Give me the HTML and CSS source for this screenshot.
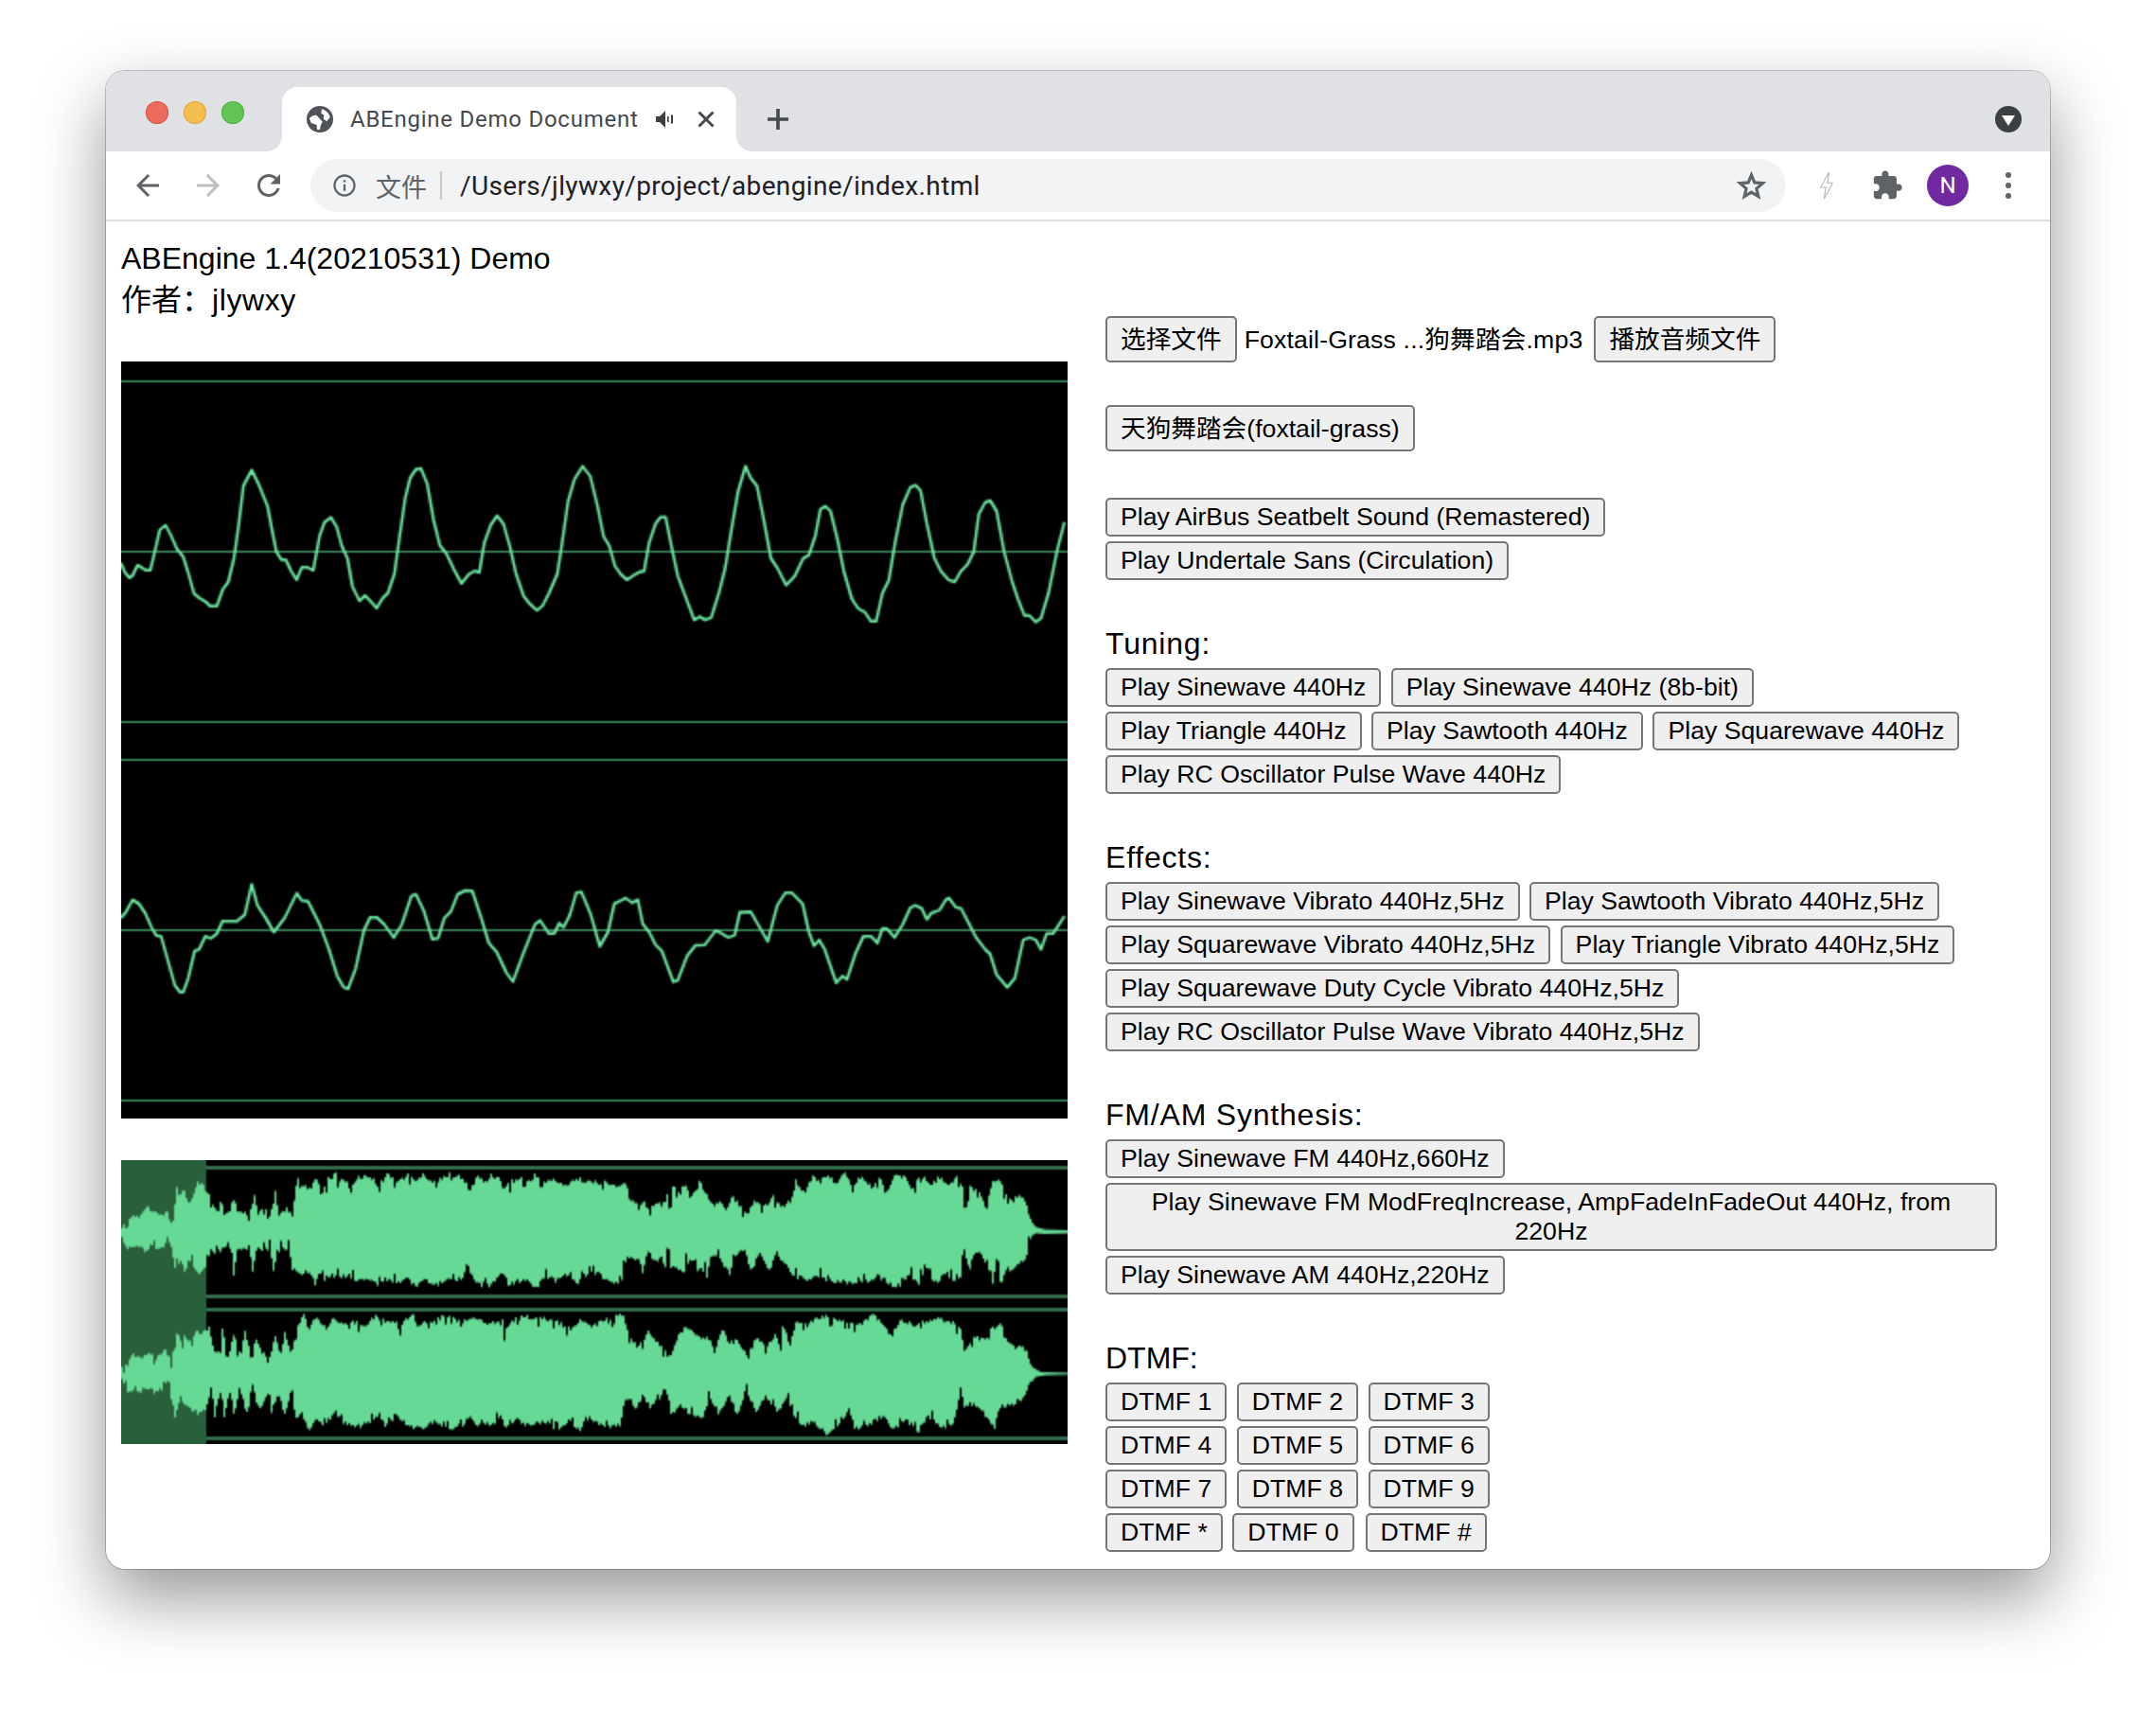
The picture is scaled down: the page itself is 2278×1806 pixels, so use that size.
FILE: index.html
```html
<!DOCTYPE html>
<html lang="zh">
<head>
<meta charset="utf-8">
<title>ABEngine Demo Document</title>
<link rel="stylesheet" href="styles.css">
</head>
<body>
<div class="window">
  <div class="tabstrip">
    <div class="lights"><span class="light red"></span><span class="light yellow"></span><span class="light green"></span></div>
    <div class="tab">
      <svg class="globe" viewBox="2 2 20 20"><circle class="disc" cx="12" cy="12" r="10"/><path class="land" d="M13.4 4.4C16.6 5.2 19 7.6 19.7 10.6L17.2 13.4 14.6 11.8 15.2 9 13 7.6z"/><path class="land" d="M4.1 11.3C5.6 9.6 8 8.6 9.6 9.2L14 14 12.6 16.4 12 20 9.8 19.6 9.6 16.2 5.4 14.8z"/></svg>
      <span class="tab-title">ABEngine Demo Document</span>
      <svg class="speaker" viewBox="0 0 20 20"><path d="M1 7v6h4l6 6V1L5 7z"/><rect x="13" y="7" width="1.6" height="6"/><rect x="17" y="5.5" width="2" height="9"/></svg>
      <svg class="close" viewBox="0 0 20 20"><path d="M2.5 2.5l15 15M17.5 2.5l-15 15"/></svg>
    </div>
    <svg class="plus" viewBox="0 0 24 24"><path d="M12 1v22M1 12h22"/></svg>
    <div class="tab-search"><svg viewBox="0 0 28 28"><path d="M7 10h14l-7 11z"/></svg></div>
  </div>
  <div class="toolbar">
    <div class="tool"><svg class="ic" viewBox="0 0 24 24"><path d="M20 11H7.83l5.59-5.59L12 4l-8 8 8 8 1.41-1.41L7.83 13H20v-2z"/></svg></div>
    <div class="tool"><svg class="ic dim" viewBox="0 0 24 24"><path d="M12 4l-1.41 1.41L16.17 11H4v2h12.17l-5.58 5.59L12 20l8-8z"/></svg></div>
    <div class="tool"><svg class="ic" viewBox="0 0 24 24"><path d="M17.65 6.35C16.2 4.9 14.21 4 12 4c-4.42 0-7.99 3.58-7.99 8s3.57 8 7.99 8c3.73 0 6.84-2.55 7.73-6h-2.08c-.82 2.33-3.04 4-5.65 4-3.31 0-6-2.69-6-6s2.69-6 6-6c1.66 0 3.14.69 4.22 1.78L13 11h7V4l-2.35 2.35z"/></svg></div>
    <div class="omnibox">
      <svg class="info" viewBox="0 0 24 24"><path d="M11 7h2v2h-2zm0 4h2v6h-2zm1-9C6.48 2 2 6.48 2 12s4.48 10 10 10 10-4.48 10-10S17.52 2 12 2zm0 18c-4.41 0-8-3.59-8-8s3.59-8 8-8 8 3.59 8 8-3.59 8-8 8z"/></svg>
      <span class="scheme">文件</span>
      <span class="divider"></span>
      <span class="url">/Users/jlywxy/project/abengine/index.html</span>
      <svg class="star" viewBox="0 0 24 24"><path d="M12 3.6l2.4 5.8 6.3.5-4.8 4.1 1.5 6.1-5.4-3.3-5.4 3.3 1.5-6.1-4.8-4.1 6.3-.5z"/></svg>
    </div>
    <div class="tool"><svg class="bolt" viewBox="0 0 24 36"><path d="M15 2L5 20h6l-2 14 10-19h-6z"/></svg></div>
    <div class="tool"><svg class="ic puzzle" viewBox="0 0 24 24"><path d="M20.5 11H19V7c0-1.1-.9-2-2-2h-4V3.5C13 2.12 11.88 1 10.5 1S8 2.12 8 3.5V5H4c-1.1 0-1.99.9-1.99 2v3.8H3.5c1.49 0 2.7 1.21 2.7 2.7s-1.21 2.7-2.7 2.7H2V20c0 1.1.9 2 2 2h3.8v-1.5c0-1.49 1.21-2.7 2.7-2.7 1.49 0 2.7 1.21 2.7 2.7V22H17c1.1 0 2-.9 2-2v-4h1.5c1.38 0 2.5-1.12 2.5-2.5S21.88 11 20.5 11z"/></svg></div>
    <div class="tool"><span class="avatar">N</span></div>
    <div class="tool"><span class="kebab"><i></i><i></i><i></i></span></div>
  </div>
  <div class="page">
    <div class="left">
      <div class="heading">ABEngine 1.4(20210531) Demo<br>作者：<span class="author">jlywxy</span></div>
      <canvas id="scope" class="scope" width="500" height="400"></canvas>
      <canvas id="overview" class="overview" width="500" height="150"></canvas>
    </div>
    <div class="right">
      <div class="file-row">
        <button class="cjk">选择文件</button>
        <span class="filename">Foxtail-Grass ...狗舞踏会.mp3</span>
        <button class="cjk">播放音频文件</button>
      </div>
      <div class="group song"><button class="cjk">天狗舞踏会(foxtail-grass)</button></div>
      <div class="group sounds">
        <button>Play AirBus Seatbelt Sound (Remastered)</button>
        <button>Play Undertale Sans (Circulation)</button>
      </div>
      <section class="section">
        <h2 class="spaced">Tuning:</h2>
        <div class="group">
          <button>Play Sinewave 440Hz</button>
          <button>Play Sinewave 440Hz (8b-bit)</button>
          <button>Play Triangle 440Hz</button>
          <button>Play Sawtooth 440Hz</button>
          <button>Play Squarewave 440Hz</button>
          <button>Play RC Oscillator Pulse Wave 440Hz</button>
        </div>
      </section>
      <section class="section">
        <h2 class="spaced">Effects:</h2>
        <div class="group">
          <button>Play Sinewave Vibrato 440Hz,5Hz</button>
          <button>Play Sawtooth Vibrato 440Hz,5Hz</button>
          <button>Play Squarewave Vibrato 440Hz,5Hz</button>
          <button>Play Triangle Vibrato 440Hz,5Hz</button>
          <button>Play Squarewave Duty Cycle Vibrato 440Hz,5Hz</button>
          <button>Play RC Oscillator Pulse Wave Vibrato 440Hz,5Hz</button>
        </div>
      </section>
      <section class="section">
        <h2 class="spaced">FM/AM Synthesis:</h2>
        <div class="group">
          <button>Play Sinewave FM 440Hz,660Hz</button>
          <button>Play Sinewave FM ModFreqIncrease, AmpFadeInFadeOut 440Hz, from 220Hz</button>
          <button>Play Sinewave AM 440Hz,220Hz</button>
        </div>
      </section>
      <section class="section">
        <h2>DTMF:</h2>
        <div class="dtmf">
          <div class="dtmf-row"><button>DTMF 1</button><button>DTMF 2</button><button>DTMF 3</button></div>
          <div class="dtmf-row"><button>DTMF 4</button><button>DTMF 5</button><button>DTMF 6</button></div>
          <div class="dtmf-row"><button>DTMF 7</button><button>DTMF 8</button><button>DTMF 9</button></div>
          <div class="dtmf-row"><button>DTMF *</button><button>DTMF 0</button><button>DTMF #</button></div>
        </div>
      </section>
    </div>
  </div>
</div>
<script src="wave.js"></script>
</body>
</html>
```
FILE: styles.css
```css
* { box-sizing: border-box; }
html, body { margin: 0; height: 100%; background: #fff; overflow: hidden; }
body { padding: 75px 112px 0; font-family: "Liberation Sans", "Noto Sans CJK SC", sans-serif; color: #000; }
svg, canvas { display: block; }

.window {
  width: 2054px; height: 1583px; background: #fff; border-radius: 20px;
  box-shadow: 0 0 0 1px rgba(0,0,0,.22), 0 30px 72px rgba(0,0,0,.42);
  display: flex; flex-direction: column;
}
.tabstrip {
  height: 85px; background: #dfe1e5; border-radius: 20px 20px 0 0;
  display: flex; align-items: flex-end; padding-left: 42px; padding-right: 30px; flex: none;
}
.lights { display: flex; gap: 16px; align-self: flex-start; padding-top: 32px; margin-right: 40px; }
.light { width: 24px; height: 24px; border-radius: 50%; }
.red { background: #ed6a5e; box-shadow: inset 0 0 0 1px #d9574c; }
.yellow { background: #f5bf4f; box-shadow: inset 0 0 0 1px #dea73c; }
.green { background: #61c554; box-shadow: inset 0 0 0 1px #52ae47; }
.tab {
  position: relative; width: 480px; height: 68px; background: #fff; border-radius: 16px 16px 0 0;
  display: flex; align-items: center; padding-left: 26px;
}
.tab::before, .tab::after { content: ""; position: absolute; bottom: 0; width: 16px; height: 16px; }
.tab::before { left: -16px; background: radial-gradient(circle at 0 0, transparent 15.5px, #fff 16px); }
.tab::after { right: -16px; background: radial-gradient(circle at 100% 0, transparent 15.5px, #fff 16px); }
.globe { width: 28px; height: 28px; flex: none; }
.disc { fill: #50545a; }
.land { fill: #fff; }
.tab-title {
  margin-left: 18px; width: 304px; white-space: nowrap; font: 400 24px Roboto, sans-serif;
  letter-spacing: .75px; color: #45484d;
}
.speaker { width: 20px; height: 20px; fill: #3c4043; margin-left: 18px; flex: none; }
.close { width: 20px; height: 20px; stroke: #45484d; stroke-width: 3; fill: none; margin-left: 24px; flex: none; }
.plus { width: 24px; height: 24px; stroke: #45484d; stroke-width: 3.6; fill: none; margin: 0 0 22px 32px; flex: none; }
.tab-search {
  width: 28px; height: 28px; border-radius: 50%; background: #3c4043; margin: 0 0 20px auto; flex: none;
}
.tab-search svg { width: 28px; height: 28px; fill: #fff; }

.toolbar {
  height: 74px; border-bottom: 2px solid #dadce0; background: #fff; flex: none;
  display: flex; align-items: center; gap: 20px; padding: 0 22px;
}
.tool { width: 44px; height: 44px; display: flex; align-items: center; justify-content: center; flex: none; }
.ic { width: 36px; height: 36px; fill: #5f6368; }
.ic.dim { fill: #bcbfc3; }
.puzzle { width: 34px; height: 34px; }
.omnibox {
  flex: 1; height: 56px; margin: 0 1px 0 2px; background: #f1f3f4; border-radius: 28px;
  display: flex; align-items: center; padding-left: 22px; padding-right: 20px;
}
.info { width: 28px; height: 28px; fill: #5f6368; flex: none; }
.scheme { font: 400 27px "Noto Sans CJK SC", sans-serif; color: #5f6368; margin-left: 19px; width: 54px; white-space: nowrap; }
.divider { width: 2px; height: 30px; background: #c6c8cb; margin-left: 14px; flex: none; }
.url { font: 400 28px Roboto, sans-serif; letter-spacing: .37px; color: #202124; margin-left: 19px; white-space: nowrap; }
.star { width: 33px; height: 33px; fill: none; stroke: #5f6368; stroke-width: 2.3; margin-left: auto; flex: none; }
.bolt { width: 22px; height: 32px; fill: #fff; stroke: #bdbdbd; stroke-width: 1.4; }
.avatar {
  width: 44px; height: 44px; border-radius: 50%; background: #7029a0; color: #fff;
  font: 400 24px Roboto, sans-serif; display: flex; align-items: center; justify-content: center;
}
.kebab { display: flex; flex-direction: column; gap: 5px; }
.kebab i { width: 6px; height: 6px; border-radius: 50%; background: #5f6368; display: block; }

.page { flex: 1; display: flex; gap: 40px; padding: 17px 0 0 16px; min-height: 0; }
.left { width: 1000px; flex: none; }
.heading { font-size: 32px; line-height: 44px; white-space: nowrap; }
.author { letter-spacing: .6px; }
.scope { width: 1000px; height: 800px; margin-top: 43px; }
.overview { width: 1000px; height: 300px; margin-top: 44px; }

.right { width: 942px; flex: none; padding-top: 83px; }
.file-row { display: flex; align-items: center; }
.filename { font-size: 26.67px; letter-spacing: .15px; margin: 0 12px 0 8px; padding-bottom: 4px; white-space: nowrap; }
button {
  font-family: inherit; font-size: 26.67px; color: #000; background: #efefef;
  border: 2px solid #767676; border-radius: 5px; padding: 3px 14px; margin: 0;
}
button.cjk { padding-top: 1px; padding-bottom: 5px; }
.group { display: flex; flex-wrap: wrap; gap: 5px 10.5px; }
.song { margin-top: 45px; }
.sounds { margin-top: 49px; }
.section { margin-top: 49px; }
h2 { font-size: 32px; font-weight: 400; line-height: 37px; margin: 0 0 7px; }
h2.spaced { letter-spacing: .8px; }
.dtmf { display: flex; flex-direction: column; gap: 5px; }
.dtmf-row { display: flex; gap: 10.5px; }
.dtmf-row:last-child button:last-child { margin-left: 1.5px; }
```
FILE: wave.js
```js
var GREEN = "#66d995";
var TRACE = "#70eaa4";
var GRID = "#418f60";

// Traced samples: x runs 27..1520 across the canvas, y is 6 units per canvas pixel.
var LEFT = [27,675,33,705,40,722,45,715,53,682,60,690,66,698,73,698,80,640,88,570,97,555,105,585,115,630,125,655,132,700,142,772,150,785,160,797,168,812,178,812,187,760,196,735,205,660,212,560,220,430,233,380,245,430,258,495,265,570,272,640,280,665,287,665,295,700,304,728,312,688,320,688,330,698,340,590,348,545,358,530,367,560,375,620,384,660,392,750,403,795,412,778,420,795,430,818,440,785,448,770,458,710,465,610,475,470,483,405,492,378,500,375,510,425,520,540,530,620,540,645,552,695,564,740,576,710,585,700,592,705,600,610,610,555,620,525,630,550,640,620,650,710,662,780,672,805,683,825,692,810,702,770,715,710,722,620,732,480,742,410,755,368,767,400,778,490,788,590,797,620,806,685,815,710,825,728,835,715,845,703,852,700,860,610,870,550,878,530,886,530,895,620,905,715,917,780,931,855,940,845,948,855,958,848,970,770,980,690,988,590,1000,450,1012,368,1020,405,1030,430,1040,530,1052,660,1062,690,1076,745,1090,715,1103,660,1112,650,1122,590,1130,505,1138,495,1146,510,1157,600,1167,700,1180,790,1190,820,1200,830,1210,860,1218,860,1228,770,1238,730,1248,610,1260,490,1272,435,1280,428,1288,445,1298,550,1310,660,1320,700,1332,728,1342,735,1352,700,1362,680,1372,640,1380,520,1390,483,1398,477,1408,510,1420,640,1432,730,1442,790,1452,842,1460,842,1470,862,1478,850,1490,770,1503,640,1515,545];
var RIGHT = [27,510,35,490,45,453,55,465,65,495,75,540,82,565,90,568,100,640,112,725,120,745,125,745,133,700,143,615,150,610,160,568,168,575,178,560,187,520,210,520,222,500,233,403,242,470,255,510,268,555,285,510,304,432,312,455,322,458,340,530,355,610,368,695,378,730,385,735,397,670,410,550,420,508,430,508,442,530,457,572,470,530,485,440,492,435,505,490,518,578,527,575,537,510,547,490,558,435,570,423,581,425,595,510,607,590,620,620,635,685,645,712,660,630,680,530,688,518,702,560,710,560,718,527,725,540,735,500,745,430,753,428,768,500,782,600,795,555,805,465,815,455,823,447,833,462,842,452,850,530,860,555,870,595,880,615,898,712,905,708,920,630,933,597,948,595,965,550,975,560,985,572,995,565,1003,492,1020,490,1047,585,1062,470,1075,430,1085,430,1102,465,1112,555,1120,598,1128,580,1137,610,1155,715,1165,695,1172,705,1185,625,1198,568,1210,568,1220,590,1228,543,1235,545,1247,572,1260,530,1272,478,1280,470,1290,480,1298,515,1305,495,1318,485,1328,452,1333,447,1343,475,1352,480,1365,530,1375,570,1390,610,1398,625,1408,690,1425,730,1437,700,1450,580,1460,572,1470,580,1478,610,1487,560,1497,560,1515,505];

// Song envelope: x runs 27..1520, y is 6 units per canvas pixel starting at 78.
var TOP1 = [27,288,38,285,42,252,55,258,62,240,70,228,76,250,85,240,93,258,100,240,105,270,110,270,114,162,120,190,127,172,133,215,140,205,147,152,155,150,165,190,172,225,178,245,185,218,192,245,198,248,205,185,211,250,220,245,230,255,237,190,243,255,252,228,262,250,270,175,276,250,285,225,292,245,298,250,305,135,310,165,318,155,325,172,335,140,345,175,355,135,365,125,372,150,380,128,390,178,398,135,410,130,420,128,432,158,442,125,455,132,465,145,478,127,490,142,505,125,520,150,535,130,545,125,560,130,570,150,578,172,590,128,600,150,612,125,622,135,630,165,645,145,660,135,672,150,680,122,695,150,710,138,725,162,740,140,755,140,770,150,785,148,800,155,810,165,825,145,828,205,840,218,855,210,858,235,870,212,885,220,888,180,893,262,898,155,905,178,918,152,925,200,940,150,950,180,962,225,972,205,983,235,990,190,1000,212,1017,250,1022,200,1035,222,1050,215,1055,190,1068,228,1085,205,1092,145,1105,180,1118,128,1130,145,1145,130,1155,150,1168,122,1180,160,1195,130,1210,165,1225,135,1235,175,1248,125,1265,135,1275,165,1290,130,1305,155,1320,130,1335,160,1345,125,1355,165,1358,255,1365,165,1385,175,1390,235,1402,140,1415,140,1422,190,1432,200,1445,185,1455,215,1462,270,1470,290,1485,298,1520,300];
var BOT1 = [27,320,35,355,45,358,55,350,65,365,75,350,85,362,97,345,105,335,112,420,120,395,128,425,135,395,147,435,155,435,170,370,195,358,202,365,205,442,210,360,230,355,235,430,240,360,262,358,268,435,272,365,292,355,298,425,312,435,325,430,332,470,340,425,350,465,360,440,372,455,385,440,400,465,415,450,430,470,445,455,460,470,475,450,490,478,505,455,525,470,545,460,560,455,575,430,585,460,600,480,612,470,628,435,638,470,655,460,670,465,685,480,695,445,715,460,730,440,745,470,760,440,780,435,790,460,815,470,822,395,830,385,845,395,850,435,858,372,870,395,880,385,885,420,890,335,895,415,915,430,918,400,930,400,935,432,948,425,952,445,958,375,970,390,988,440,992,385,1010,355,1020,430,1035,375,1050,425,1060,372,1075,405,1085,440,1095,450,1110,455,1125,445,1145,460,1175,465,1205,462,1222,445,1240,470,1255,478,1270,440,1285,470,1297,415,1310,470,1325,440,1345,465,1352,440,1355,350,1365,420,1375,365,1390,395,1402,468,1408,385,1415,465,1425,425,1445,410,1455,385,1462,320,1470,310,1485,312,1520,310];
var TOP2 = [27,740,38,725,42,690,55,700,70,695,82,705,90,690,97,680,105,715,112,668,116,635,122,650,128,635,135,660,145,628,155,625,165,610,175,680,182,695,187,610,195,700,205,635,215,698,222,625,232,700,240,645,250,690,262,705,270,640,280,695,285,615,295,695,305,600,315,570,325,595,335,580,350,610,362,580,378,605,395,590,410,600,428,575,445,590,465,590,468,640,472,585,487,567,495,600,515,590,540,570,565,590,585,580,610,595,630,580,632,630,640,590,660,575,690,580,715,590,735,615,750,585,770,605,795,580,820,570,830,640,842,675,860,625,875,665,892,700,905,640,920,605,935,635,950,640,965,675,975,610,985,660,1000,650,1015,700,1030,640,1045,675,1058,630,1068,680,1072,600,1082,670,1092,590,1110,600,1135,572,1160,590,1190,600,1215,570,1240,625,1260,585,1280,600,1310,580,1340,590,1352,620,1358,685,1372,635,1390,650,1400,610,1418,600,1425,660,1440,670,1455,680,1465,735,1478,750,1520,752];
var BOT2 = [27,765,35,805,50,815,65,805,85,815,100,785,105,825,112,890,118,845,135,860,145,890,160,870,170,810,175,885,185,810,190,885,200,805,205,880,215,810,225,880,235,805,245,870,260,810,265,875,275,810,285,885,295,810,302,895,310,885,322,930,335,905,350,915,365,870,375,905,395,925,415,915,430,890,445,920,462,890,475,925,500,930,520,910,545,930,565,915,580,895,590,920,615,915,625,880,635,930,650,895,670,920,695,905,715,930,735,905,750,930,765,895,790,925,815,920,822,835,830,830,838,865,850,825,862,865,875,835,887,800,895,880,910,860,930,885,945,900,955,830,970,880,985,825,1000,885,1012,805,1030,875,1045,825,1060,880,1078,835,1090,895,1105,925,1115,905,1140,945,1155,920,1175,870,1185,930,1200,925,1230,885,1245,935,1265,905,1285,935,1300,890,1320,925,1340,915,1352,800,1358,855,1372,850,1385,875,1405,925,1412,860,1430,855,1450,830,1460,790,1470,765,1485,760,1520,758];

function rule(ctx, y) {
  ctx.strokeStyle = GREEN;
  ctx.lineWidth = 1;
  ctx.beginPath();
  ctx.moveTo(0, y);
  ctx.lineTo(ctx.canvas.width, y);
  ctx.stroke();
}

function trace(ctx, pts, shift) {
  ctx.strokeStyle = TRACE;
  ctx.lineWidth = 1.5;
  ctx.lineJoin = "round";
  ctx.beginPath();
  for (var i = 0; i < pts.length; i += 2) {
    var x = (pts[i] - 27) / 1493 * 500;
    var y = (pts[i + 1] + shift - 36) / 6;
    if (i === 0) ctx.moveTo(x, y); else ctx.lineTo(x, y);
  }
  ctx.stroke();
}

// Envelope height at a column, keeping the extreme sample inside the column so spikes survive.
function envelope(pts, col, pickLeast) {
  var x0 = 27 + col * 1493 / 500, x1 = x0 + 1493 / 500, best = null;
  for (var i = 0; i < pts.length - 2; i += 2) {
    var ax = pts[i], ay = pts[i + 1], bx = pts[i + 2], by = pts[i + 3];
    if (bx < x0 || ax > x1) continue;
    var t = Math.max(0, Math.min(1, ((x0 + x1) / 2 - ax) / (bx - ax)));
    var candidates = [ay + (by - ay) * t];
    if (ax >= x0 && ax <= x1) candidates.push(ay);
    if (bx >= x0 && bx <= x1) candidates.push(by);
    for (var c = 0; c < candidates.length; c++) {
      if (best === null || (pickLeast ? candidates[c] < best : candidates[c] > best)) best = candidates[c];
    }
  }
  return best === null ? pts[pts.length - 1] : best;
}

function noise(n) {
  var v = Math.sin(n * 12.9898) * 43758.5453;
  return v - Math.floor(v);
}

function channel(ctx, top, bottom, seed) {
  ctx.fillStyle = GREEN;
  for (var col = 0; col < 500; col++) {
    var quiet = col > 480;
    var j1 = quiet ? 0 : (noise(col + seed) - .5) * 16;
    var j2 = quiet ? 0 : (noise(col + seed + 997) - .5) * 16;
    if (!quiet && noise(col + seed + 31) > .9) j1 += 22;
    if (!quiet && noise(col + seed + 61) > .9) j2 -= 22;
    var y0 = (envelope(top, col, true) + j1 - 78) / 6;
    var y1 = (envelope(bottom, col, false) + j2 - 78) / 6;
    ctx.fillRect(col, y0, 1, y1 - y0);
  }
}

function drawScope() {
  var ctx = document.getElementById("scope").getContext("2d");
  ctx.fillStyle = "#000";
  ctx.fillRect(0, 0, 500, 400);
  ctx.fillStyle = GRID;
  [10, 100, 190, 210, 300, 390].forEach(function (y) { ctx.fillRect(0, y, 500, 1); });
  trace(ctx, LEFT, 0);
  trace(ctx, RIGHT, 1290);
}

function drawOverview() {
  var ctx = document.getElementById("overview").getContext("2d");
  ctx.fillStyle = "#000";
  ctx.fillRect(0, 0, 500, 150);
  [4, 72, 79, 147].forEach(function (y) { rule(ctx, y); });
  ctx.fillStyle = "#2a5f3c";
  ctx.fillRect(0, 0, 45, 150);
  channel(ctx, TOP1, BOT1, 11);
  channel(ctx, TOP2, BOT2, 503);
}

drawScope();
drawOverview();
```
